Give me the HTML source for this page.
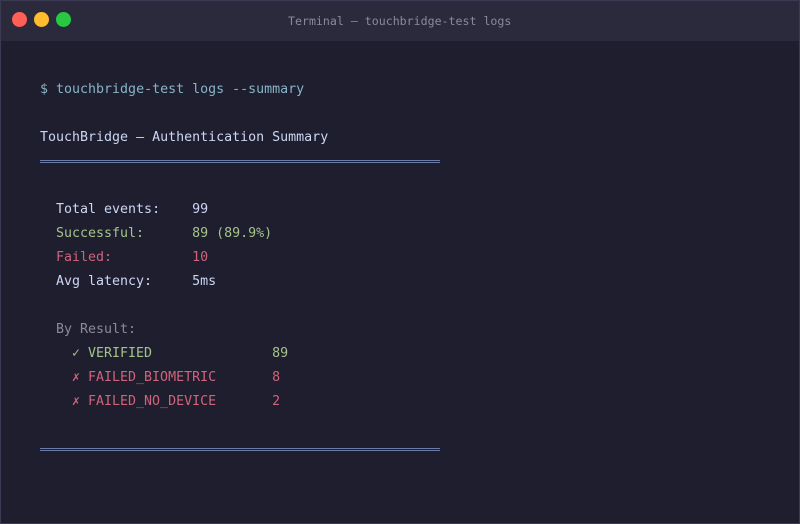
<!DOCTYPE html>
<html><head><style>
body{margin:0;width:800px;height:524px;background:#1e1e2e;overflow:hidden}
.win{position:absolute;left:0;top:0;width:798px;height:522px;border:1px solid #3b3a52;background:#1e1e2e}
.bar{position:absolute;left:0;top:0;width:798px;height:40px;background:#2b2a3d}
.dot{position:absolute;top:11px;width:15px;height:15px;border-radius:50%}
.t{position:absolute;font-family:"DejaVu Sans Mono","Liberation Mono",monospace;font-size:13.3px;line-height:24px;white-space:pre;color:#cdd6f4}
.rule{position:absolute;left:39px;width:400px;height:1px;border-top:1px solid #6b7aa6;border-bottom:1px solid #6b7aa6}
.g{color:#a6c48a}.r{color:#d0637a}.m{color:#8a8a98}.c{color:#89b4c8}
</style></head><body><div class="win">
<div class="bar"></div>
<div class="dot" style="left:11px;background:#ff5f57"></div>
<div class="dot" style="left:33px;background:#febc2e"></div>
<div class="dot" style="left:55px;background:#28c840"></div>
<div class="t m" style="left:287px;top:8px;font-size:11.6px">Terminal — touchbridge-test logs</div>
<div class="t c" style="left:39px;top:77px">$ touchbridge-test logs --summary</div>
<div class="t" style="left:39px;top:125px">TouchBridge — Authentication Summary</div>
<div class="rule" style="top:159px"></div>
<div class="t" style="left:55px;top:197px">Total events:    99</div>
<div class="t g" style="left:55px;top:221px">Successful:      89 (89.9%)</div>
<div class="t r" style="left:55px;top:245px">Failed:          10</div>
<div class="t" style="left:55px;top:269px">Avg latency:     5ms</div>
<div class="t m" style="left:55px;top:317px">By Result:</div>
<div class="t g" style="left:71px;top:341px">✓ VERIFIED               89</div>
<div class="t r" style="left:71px;top:365px">✗ FAILED_BIOMETRIC       8</div>
<div class="t r" style="left:71px;top:389px">✗ FAILED_NO_DEVICE       2</div>
<div class="rule" style="top:447px"></div>
</div></body></html>
